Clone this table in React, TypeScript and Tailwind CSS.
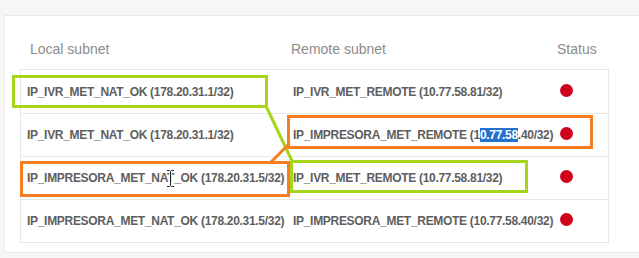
import React from "react";

const rows: { l: string; r: React.ReactNode }[] = [
  { l: "IP_IVR_MET_NAT_OK (178.20.31.1/32)", r: "IP_IVR_MET_REMOTE (10.77.58.81/32)" },
  {
    l: "IP_IVR_MET_NAT_OK (178.20.31.1/32)",
    r: (
      <>
        IP_IMPRESORA_MET_REMOTE (1
        <span className="bg-[#2471cf] text-white">0.77.58</span>.40/32)
      </>
    ),
  },
  { l: "IP_IMPRESORA_MET_NAT_OK (178.20.31.5/32)", r: "IP_IVR_MET_REMOTE (10.77.58.81/32)" },
  { l: "IP_IMPRESORA_MET_NAT_OK (178.20.31.5/32)", r: "IP_IMPRESORA_MET_REMOTE (10.77.58.40/32)" },
];

export default function App() {
  return (
    <div
      className="relative w-[639px] h-[258px] overflow-hidden bg-[#f6f6f7] pt-[15px] pl-[4px]"
      style={{ fontFamily: '"Liberation Sans", Arial, sans-serif' }}
    >
      <div className="h-[238px] bg-white border border-r-0 border-[#ebe8ea] pt-[13px] pl-[15px]">
        <div className="w-[589px]">
          <div className="grid grid-cols-[267px_268px_54px] h-[40px] items-center text-[14px] text-[#8c8c8c]">
            <div className="pl-[10px]">Local subnet</div>
            <div className="pl-[4px]">Remote subnet</div>
            <div className="pl-[2px]">Status</div>
          </div>
          <div className="border border-[#e8e8e8]">
            {rows.map((row, i) => (
              <div
                key={i}
                className={
                  "grid grid-cols-[266px_268px_54px] h-[43px] items-center text-[12px] font-bold tracking-[-0.3px] text-[#5e5e5e] " +
                  (i > 0 ? "border-t border-[#e8e8e8]" : "")
                }
              >
                <div className="pl-[6px] whitespace-nowrap">{row.l}</div>
                <div className="pl-[6px] whitespace-nowrap">{row.r}</div>
                <div className="pl-[5px]">
                  <div className="w-[13px] h-[13px] rounded-full bg-[#d0021b] -mt-[3px]" />
                </div>
              </div>
            ))}
          </div>
        </div>
      </div>

      {/* annotations */}
      <div className="absolute left-[12px] top-[75px] w-[256px] h-[33px] border-[3px] border-[#a6d61c]" />
      <div className="absolute left-[287px] top-[115px] w-[306px] h-[34px] border-[3px] border-[#f57e22]" />
      <div className="absolute left-[20px] top-[161px] w-[270px] h-[36px] border-[3px] border-[#f57e22]" />
      <div className="absolute left-[290px] top-[160px] w-[238px] h-[33px] border-[3px] border-[#a6d61c]" />
      <svg className="absolute left-0 top-0" width="639" height="258">
        <line x1="266" y1="106" x2="292" y2="161" stroke="#a6d61c" strokeWidth="3" />
        <line x1="271" y1="162" x2="288" y2="145" stroke="#f57e22" strokeWidth="3" />
      </svg>
      {/* I-beam cursor */}
      <svg className="absolute left-[166px] top-[169px]" width="9" height="19" viewBox="0 0 9 19">
        <path d="M1 1.5h2.5l1 1 1-1H8M4.5 2.5v14M1 17.5h2.5l1-1 1 1H8" stroke="#fff" strokeWidth="2.6" fill="none" />
        <path d="M1 1.5h2.5l1 1 1-1H8M4.5 2.5v14M1 17.5h2.5l1-1 1 1H8" stroke="#222" strokeWidth="1" fill="none" />
      </svg>
    </div>
  );
}
